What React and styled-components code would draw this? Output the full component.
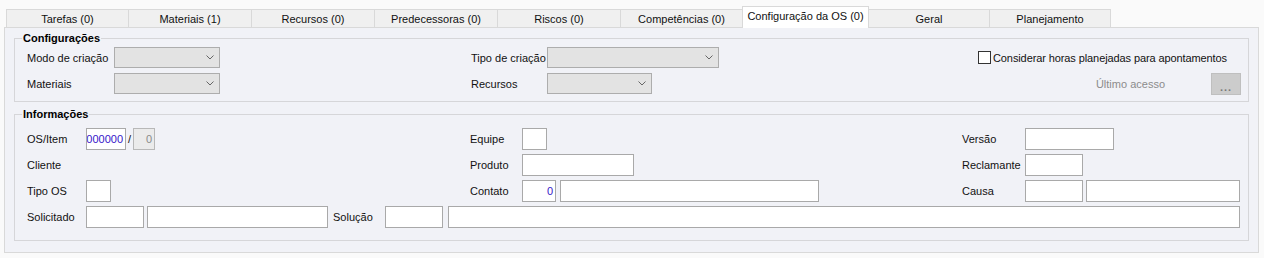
import React from "react";
import styled, { createGlobalStyle, css } from "styled-components";

const GlobalStyle = createGlobalStyle`
  html, body { margin: 0; padding: 0; background: #fafafa; }
  body {
    font-family: "Liberation Sans", Arial, sans-serif;
    font-size: 11px;
    color: #111;
  }
  * { box-sizing: border-box; }
`;

const Window = styled.div`
  width: 1264px;
  height: 258px;
  padding: 6px 5px 0 4px;
`;

const TabStrip = styled.div`
  display: flex;
  align-items: flex-end;
  height: 21px;
  padding-left: 2px;
  position: relative;
  z-index: 1;
`;

const Tab = styled.div`
  width: ${(p) => p.$w}px;
  height: 18px;
  margin-left: -1px;
  &:first-child { margin-left: 0; }
  border: 1px solid #d9d9d9;
  border-bottom: none;
  background: #f0f0f0;
  display: flex;
  align-items: center;
  justify-content: center;
  white-space: nowrap;
  color: #111;
  ${(p) =>
    p.$active &&
    css`
      height: 22px;
      margin-bottom: -1px;
      background: #ffffff;
      position: relative;
      z-index: 2;
      padding-bottom: 3px;
    `}
`;

const Panel = styled.div`
  border: 1px solid #d9d9d9;
  background: #f1f2f7;
  height: 226px;
  padding: 4px 9px 0 9px;
  display: flex;
  flex-direction: column;
  gap: 6px;
`;

const Group = styled.fieldset`
  margin: 0;
  border: 1px solid #d6d6d9;
  padding: ${(p) => p.$pad};
  min-width: 0;
`;

const Legend = styled.legend`
  font-weight: bold;
  padding: 0 1px;
  margin-left: -5px;
  line-height: 13px;
  color: #000;
`;

const ConfigGrid = styled.div`
  display: grid;
  grid-template-columns: 444px 1fr auto;
  grid-auto-rows: 21px;
  row-gap: 5px;
  align-items: center;
`;

const Field = styled.div`
  display: flex;
  align-items: center;
  min-width: 0;
`;

const Label = styled.span`
  width: ${(p) => (p.$w ? `${p.$w}px` : "auto")};
  flex: none;
  white-space: nowrap;
  color: ${(p) => (p.$muted ? "#8c8c8c" : "#111")};
`;

const ComboBox = styled.div`
  width: ${(p) => p.$w}px;
  height: 21px;
  background: #e3e3e3;
  border: 1px solid #adadad;
  display: flex;
  align-items: center;
  justify-content: flex-end;
  padding-right: 5px;
`;

const Chevron = () => (
  <svg width="8" height="5" viewBox="0 0 8 5">
    <path d="M0.5 0.5 L4 4 L7.5 0.5" fill="none" stroke="#666" strokeWidth="1" />
  </svg>
);

const RightCell = styled.div`
  display: flex;
  align-items: center;
  justify-content: flex-end;
  gap: ${(p) => p.$gap ?? 0}px;
  padding-right: ${(p) => p.$pr ?? 0}px;
`;

const CheckBox = styled.span`
  width: 13px;
  height: 13px;
  border: 1px solid #333;
  background: #ffffff;
  flex: none;
`;

const CheckText = styled.span`
  white-space: nowrap;
  letter-spacing: -0.1px;
`;

const SmallButton = styled.div`
  width: 30px;
  height: 22px;
  background: #cccccc;
  border: 1px solid #bfbfbf;
  color: #7a7a7a;
  display: flex;
  align-items: flex-end;
  justify-content: center;
  line-height: 14px;
  font-weight: bold;
  letter-spacing: 1px;
`;

const InfoRows = styled.div`
  display: flex;
  flex-direction: column;
  gap: 4px;
`;

const InfoRow = styled.div`
  display: grid;
  grid-template-columns: 443px 492px 1fr;
  height: 22px;
  align-items: center;
`;

const FlowRow = styled.div`
  display: flex;
  align-items: center;
  height: 22px;
`;

const TextBox = styled.div`
  width: ${(p) => (p.$w ? `${p.$w}px` : "auto")};
  flex: ${(p) => (p.$w ? "none" : "1")};
  height: 22px;
  margin-right: ${(p) => p.$mr ?? 0}px;
  background: ${(p) => (p.$disabled ? "#ebebeb" : "#ffffff")};
  border: 1px solid ${(p) => (p.$disabled ? "#b8b8b8" : "#a9a9a9")};
  display: flex;
  align-items: center;
  justify-content: flex-end;
  overflow: hidden;
  white-space: nowrap;
  padding-right: 2px;
  color: ${(p) => (p.$disabled ? "#8a8a8a" : p.$value ? "#3516c9" : "#111")};
`;

const Slash = styled.span`
  width: 7px;
  text-align: center;
  flex: none;
`;

const tabs = [
  { t: "Tarefas (0)", w: 123 },
  { t: "Materiais (1)", w: 124 },
  { t: "Recursos (0)", w: 124 },
  { t: "Predecessoras (0)", w: 124 },
  { t: "Riscos (0)", w: 124 },
  { t: "Competências (0)", w: 123 },
  { t: "Configuração da OS (0)", w: 127, active: true },
  { t: "Geral", w: 122 },
  { t: "Planejamento", w: 122 },
];

export default function App() {
  return (
    <>
      <GlobalStyle />
      <Window>
        <TabStrip>
          {tabs.map((tab) => (
            <Tab key={tab.t} $w={tab.w} $active={tab.active}>
              {tab.t}
            </Tab>
          ))}
        </TabStrip>
        <Panel>
          <Group $pad="2px 7px 7px 12px">
            <Legend>Configurações</Legend>
            <ConfigGrid>
              <Field>
                <Label $w={87}>Modo de criação</Label>
                <ComboBox $w={106}><Chevron /></ComboBox>
              </Field>
              <Field>
                <Label $w={76}>Tipo de criação</Label>
                <ComboBox $w={172}><Chevron /></ComboBox>
              </Field>
              <RightCell $gap={2} $pr={14}>
                <CheckBox />
                <CheckText>Considerar horas planejadas para apontamentos</CheckText>
              </RightCell>
              <Field>
                <Label $w={87}>Materiais</Label>
                <ComboBox $w={106}><Chevron /></ComboBox>
              </Field>
              <Field>
                <Label $w={76}>Recursos</Label>
                <ComboBox $w={105}><Chevron /></ComboBox>
              </Field>
              <RightCell $gap={46}>
                <Label $muted>Último acesso</Label>
                <SmallButton>...</SmallButton>
              </RightCell>
            </ConfigGrid>
          </Group>
          <Group $pad="7px 8px 12px 12px">
            <Legend>Informações</Legend>
            <InfoRows>
              <InfoRow>
                <Field>
                  <Label $w={59}>OS/Item</Label>
                  <TextBox $w={40} $value>0000000</TextBox>
                  <Slash>/</Slash>
                  <TextBox $w={22} $disabled>0</TextBox>
                </Field>
                <Field>
                  <Label $w={52}>Equipe</Label>
                  <TextBox $w={25} />
                </Field>
                <Field>
                  <Label $w={63}>Versão</Label>
                  <TextBox $w={89} />
                </Field>
              </InfoRow>
              <InfoRow>
                <Field>
                  <Label $w={59}>Cliente</Label>
                </Field>
                <Field>
                  <Label $w={52}>Produto</Label>
                  <TextBox $w={112} />
                </Field>
                <Field>
                  <Label $w={63}>Reclamante</Label>
                  <TextBox $w={58} />
                </Field>
              </InfoRow>
              <InfoRow>
                <Field>
                  <Label $w={59}>Tipo OS</Label>
                  <TextBox $w={25} />
                </Field>
                <Field>
                  <Label $w={52}>Contato</Label>
                  <TextBox $w={34} $mr={4} $value>0</TextBox>
                  <TextBox $w={259} />
                </Field>
                <Field>
                  <Label $w={63}>Causa</Label>
                  <TextBox $w={58} $mr={3} />
                  <TextBox />
                </Field>
              </InfoRow>
              <FlowRow>
                <Label $w={59}>Solicitado</Label>
                <TextBox $w={58} $mr={3} />
                <TextBox $w={181} $mr={5} />
                <Label $w={52}>Solução</Label>
                <TextBox $w={58} $mr={5} />
                <TextBox />
              </FlowRow>
            </InfoRows>
          </Group>
        </Panel>
      </Window>
    </>
  );
}
